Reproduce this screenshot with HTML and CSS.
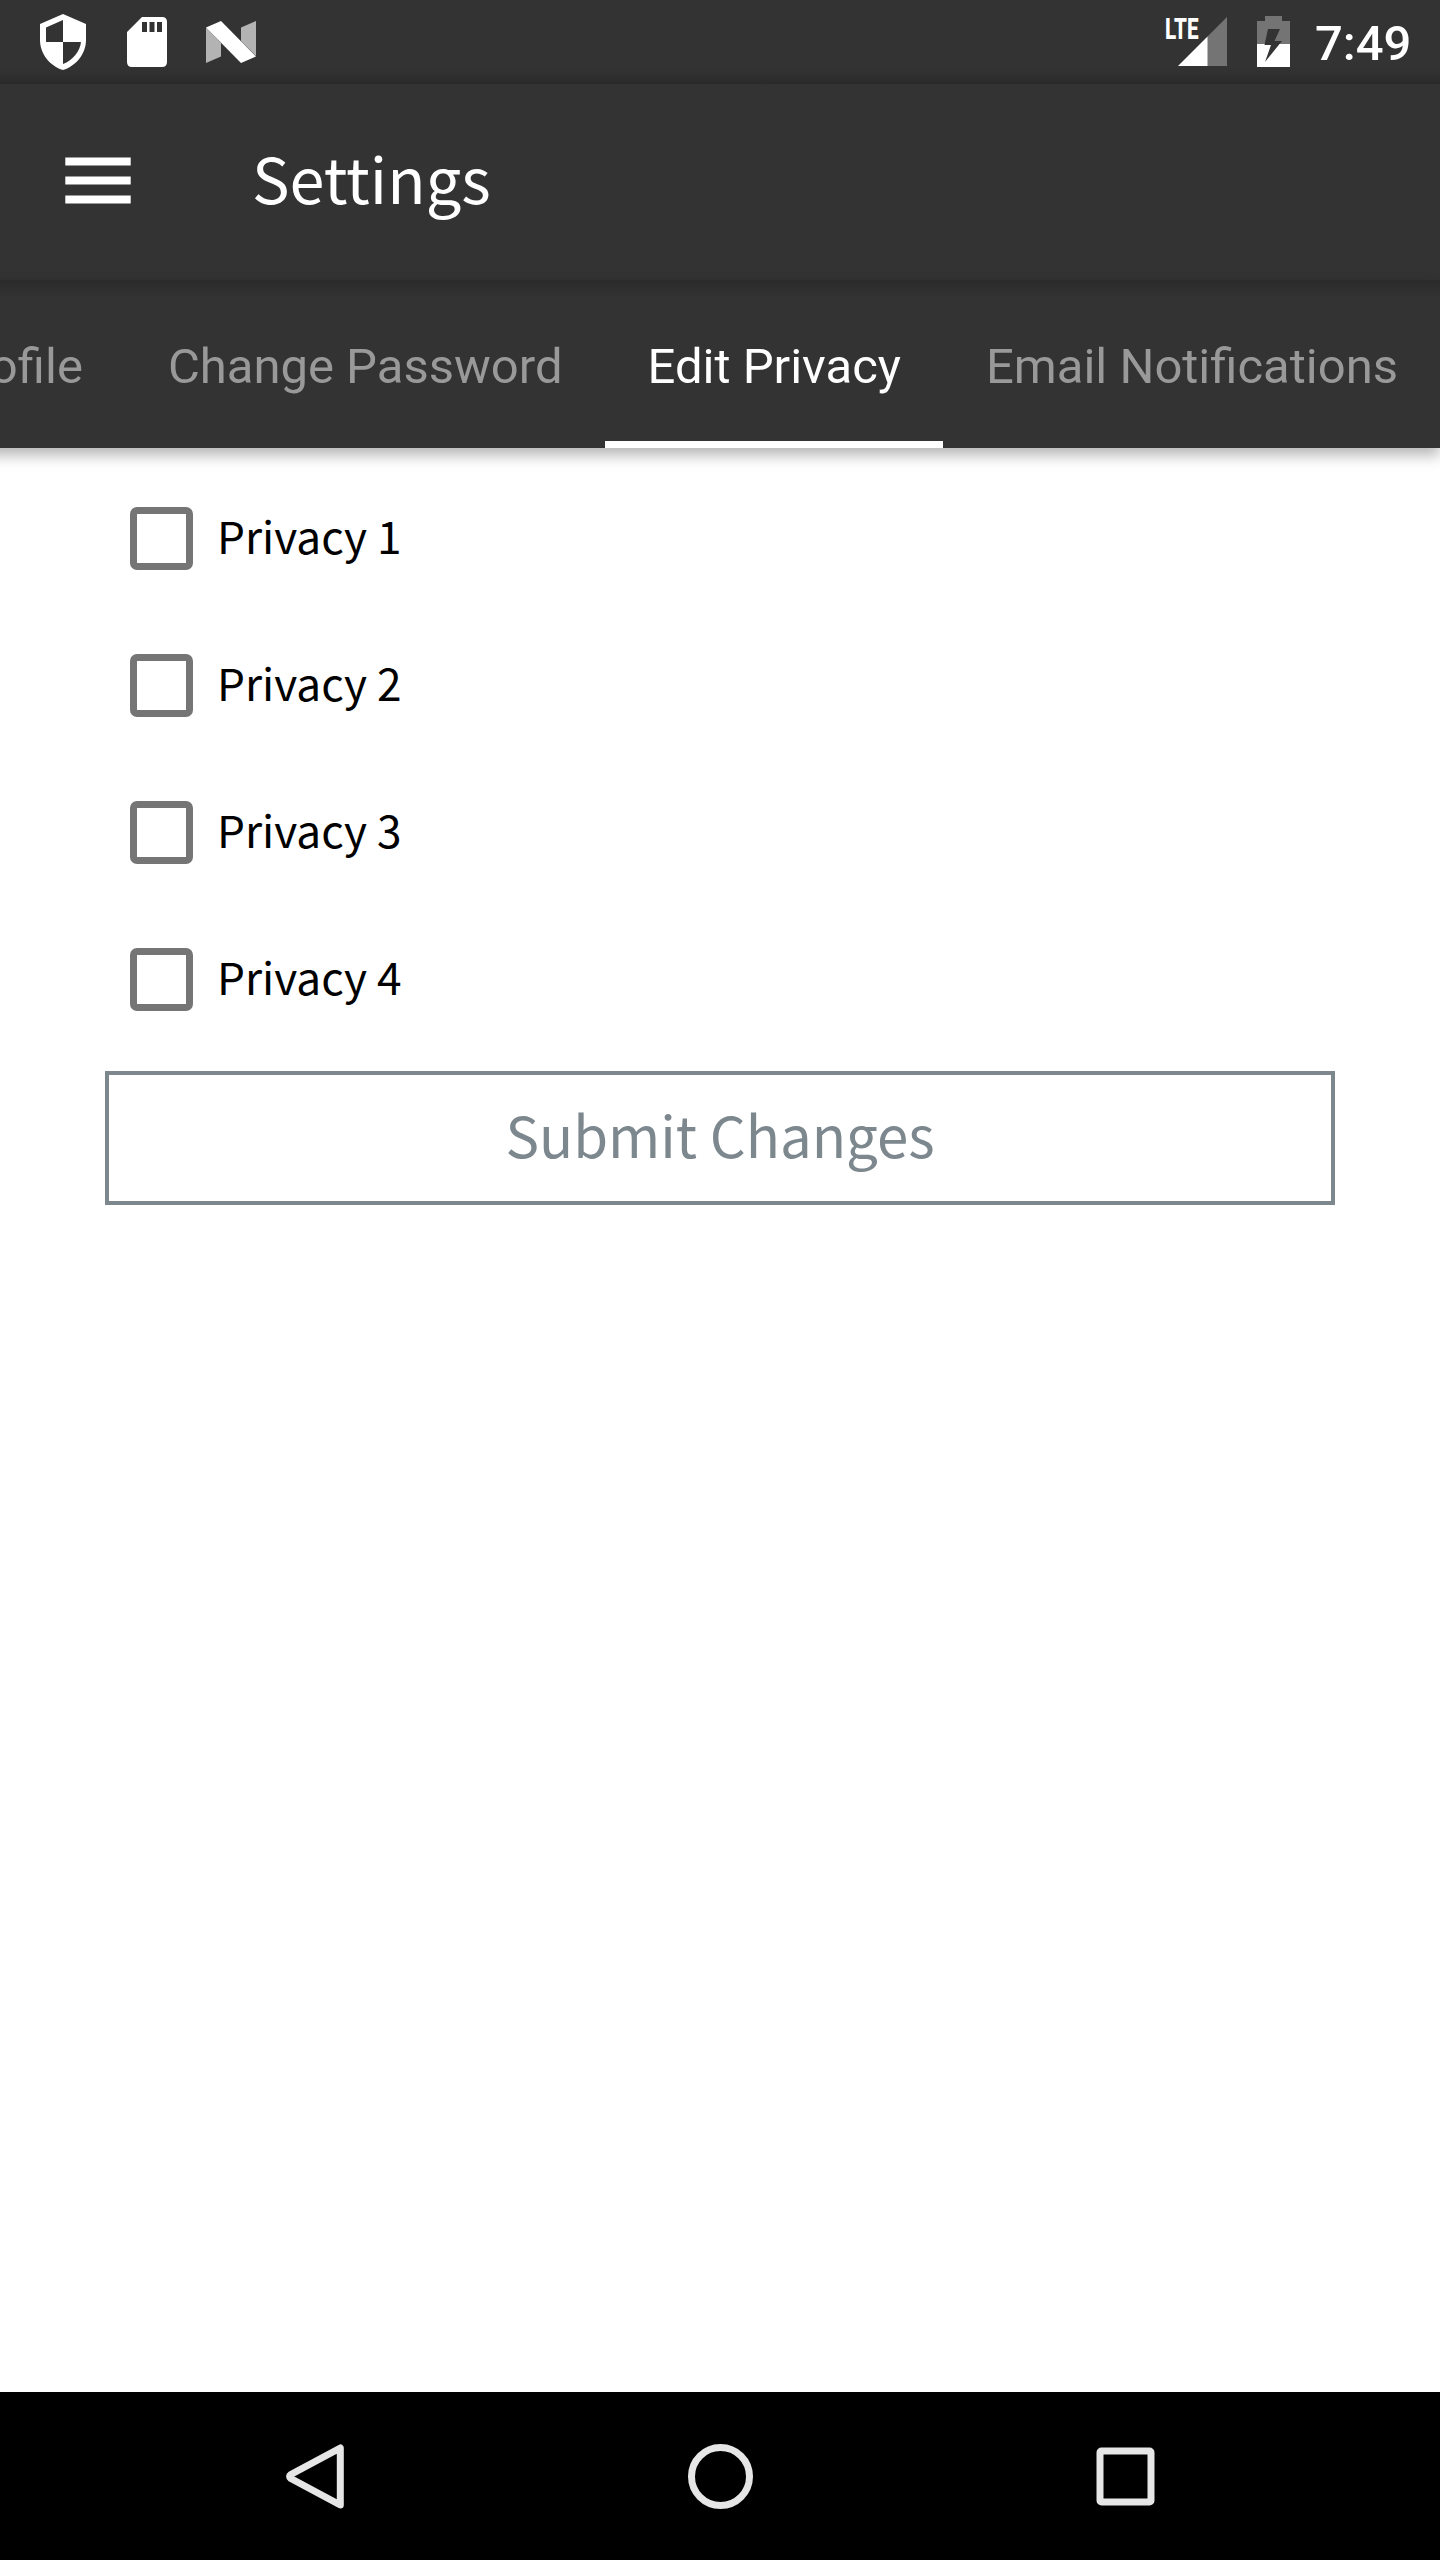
FILE: index.html
```html
<!DOCTYPE html>
<html lang="en">
<head>
<meta charset="utf-8">
<title>Settings</title>
<link rel="stylesheet" href="styles.css">
</head>
<body>
<div class="screen">
  <header class="status">
    <svg class="status-left" width="300" height="84" viewBox="0 0 300 84" fill="#fff">
      <path fill-rule="evenodd" d="M63 14 L86 24 V40 C86 54 76 66 63 70 C50 66 40 54 40 40 V24 Z M63 20 L46 27.500 V42 H63 Z M63 42 V64 C73 60.500 80 51 81 42 Z"/>
      <path fill-rule="evenodd" d="M142 17 H162 Q167 17 167 22 V62 Q167 67 162 67 H132 Q127 67 127 62 V32 Z M142 22 V32 H147 V22 Z M149.500 22 V32 H154.500 V22 Z M157 22 V32 H162 V22 Z"/>
      <path fill="#b3b3b3" d="M206 27.500 L221 43 V56.500 L206 63 Z M241 27.500 L256 21 V56 L241 41 Z"/>
      <path d="M206 27.500 L221 21 L256 56.500 L241 63 Z"/>
    </svg>
    <div class="status-right">
      <svg width="132" height="84" viewBox="1160 0 132 84">
        <text class="lte" x="1165" y="39" textLength="33.500" lengthAdjust="spacingAndGlyphs">LTE</text>
        <path fill="#747474" d="M1227 17 V66 H1207 V37 Z"/>
        <path fill="#fff" d="M1207.500 36.500 V66 H1178 Z"/>
        <path fill="#747474" d="M1257 44 V21 H1265 V16 H1282 V21 H1290 V44 Z"/>
        <path fill="#fff" d="M1257 44 H1290 V67 H1257 Z"/>
        <path fill="#333" d="M1268 29 H1280 L1274.500 41 H1282 L1265 62 L1271 45 H1264.500 Z"/>
      </svg>
      <span class="clock">7:49</span>
    </div>
  </header>
  <div class="toolbar">
    <svg width="66" height="48" viewBox="0 0 66 48" fill="#fff"><path d="M.3 .4H65.700V8.600H.3ZM.3 19.400H65.700V27.600H.3ZM.3 38.400H65.700V46.600H.3Z"/></svg>
    <h1 class="title">Settings</h1>
  </div>
  <nav class="tabs">
    <div class="tab">Edit Profile</div>
    <div class="tab">Change Password</div>
    <div class="tab tab-active">Edit Privacy</div>
    <div class="tab">Email Notifications</div>
  </nav>
  <main class="content">
    <label class="option"><span class="box"></span>Privacy 1</label>
    <label class="option"><span class="box"></span>Privacy 2</label>
    <label class="option"><span class="box"></span>Privacy 3</label>
    <label class="option"><span class="box"></span>Privacy 4</label>
    <button class="submit">Submit Changes</button>
  </main>
  <footer class="navbar">
    <svg width="84" height="84" viewBox="0 0 84 84"><path d="M66.500 13.500 V70.500 L17 44 Q14.500 42 17 40 Z" transform="translate(.8 .5)"/></svg>
    <svg width="84" height="84" viewBox="0 0 84 84"><circle cx="42.500" cy="42.500" r="29"/></svg>
    <svg width="84" height="84" viewBox="0 0 84 84"><rect x="17" y="17" width="51" height="51" rx="1.500"/></svg>
  </footer>
</div>
</body>
</html>
```
FILE: styles.css
```css
* { box-sizing: border-box; }
body { margin: 0; }
.screen {
  width: 1440px;
  height: 2560px;
  display: flex;
  flex-direction: column;
  overflow: hidden;
  background: #fff;
  font-family: "Noto Sans CJK JP", "Noto Sans", sans-serif;
}
.status {
  height: 84px;
  display: flex;
  justify-content: space-between;
  background: linear-gradient(#333 68px, #2a2a2a 84px);
}
.status-right { display: flex; width: 280px; }
.status-right svg { flex: none; }
.lte { font: 800 30px Roboto, sans-serif; fill: #fff; }
.clock {
  margin-left: 23px;
  font: 500 49px/88px Roboto, sans-serif;
  color: #fff;
}
.toolbar {
  height: 196px;
  padding: 0 0 2px 65px;
  display: flex;
  align-items: center;
  gap: 121px;
  background: #333;
  color: #fff;
}
.title {
  margin: 0;
  padding-bottom: 9px;
  font-size: 63px;
  font-weight: 400;
  line-height: 84px;
}
.tabs {
  height: 168px;
  flex: none;
  display: flex;
  background: linear-gradient(#2a2a2a, #333 18px);
  box-shadow: 0 7px 14px rgba(0, 0, 0, .3);
  font: 400 49px/57px Roboto, sans-serif;
  color: #999;
  margin-left: -194.8px;
}
.tab {
  flex: none;
  padding: 58px 42.5px 0;
  white-space: nowrap;
}
.tab-active { color: #fff; border-bottom: 7px solid #fff; }
.content {
  flex: 1;
  display: flex;
  flex-direction: column;
  padding: 35px 105px 0;
}
.option {
  height: 147px;
  padding: 20px 0 0 24.5px;
  display: flex;
  align-items: flex-start;
  gap: 24.5px;
  font-size: 44.200px;
  line-height: 65px;
  color: #000;
}
.box {
  width: 63px;
  height: 63px;
  margin-top: 4.3px;
  border: 7px solid #757575;
  border-radius: 7px;
}
.submit {
  height: 134px;
  padding: 0 0 9px;
  border: 4px solid #7d878e;
  background: #fff;
  color: #7d878e;
  font: 400 56.400px/84px "Noto Sans CJK JP", "Noto Sans", sans-serif;
}
.navbar {
  height: 168px;
  padding: 0 113px 0 112px;
  display: grid;
  grid-template-columns: repeat(3, 405px);
  align-items: center;
  justify-items: center;
  background: #000;
}
.navbar svg { fill: none; stroke: #e6e6e6; stroke-width: 7; stroke-linejoin: round; }
```
